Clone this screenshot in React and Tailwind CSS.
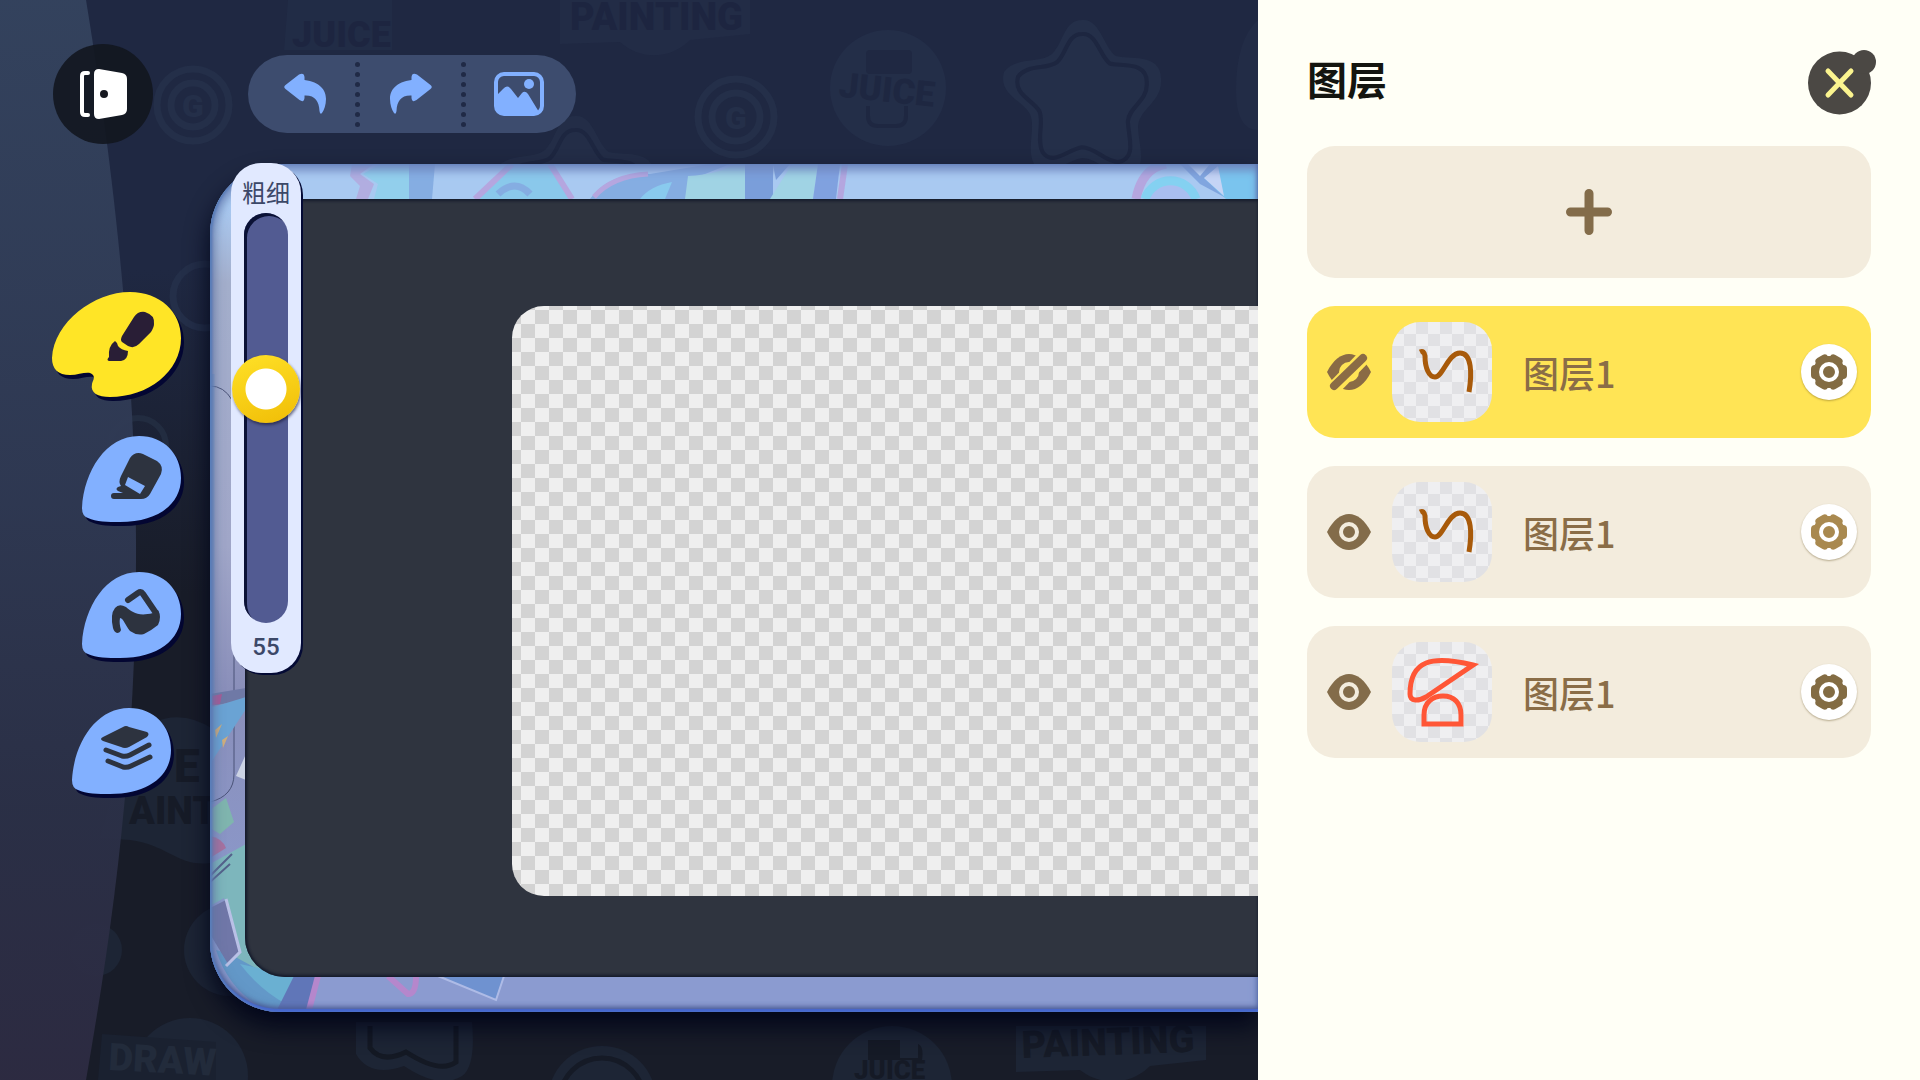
import React, { useState } from 'react';

const DROP_PATH = 'M0 72 C2 35 24 0 57 0 C82 0 99 18 99 42 C99 68 76 86 38 86 C26 86 14 86 6 82 Q0 80 0 72Z';
const PALETTE_PATH =
  'M0 66 C2 30 42 0 78 0 C108 0 129 20 129 46 C129 80 96 105 58 105 C46 105 38 101 40 92 C41 88 43 86 41 83 C37 78 28 83 18 83 C6 83 0 77 0 66Z';

const layers = [
  { id: 1, name: '图层1', visible: false, selected: true, art: 'wave', gear: 'text-[#836c43]' },
  { id: 2, name: '图层1', visible: true, selected: false, art: 'wave', gear: 'text-[#a9894f]' },
  { id: 3, name: '图层1', visible: true, selected: false, art: 'shapes', gear: 'text-[#836c43]' },
];

// Faint stickers printed on the wall behind the board
function Wallpaper() {
  const star =
    'M0 -78 C18 -80 22 -50 34 -42 C46 -38 80 -46 79 -18 C80 4 58 10 56 28 C56 46 68 74 44 78 C28 78 16 60 0 60 C-16 62 -36 84 -48 66 C-56 50 -46 30 -52 16 C-60 2 -84 -4 -78 -26 C-66 -42 -42 -34 -30 -44 C-18 -56 -18 -78 0 -78Z';
  return (
    <svg className="absolute inset-0 w-full h-full" aria-hidden="true">
      <g fill="#242f49" fontFamily="Roboto, sans-serif" fontWeight="900">
        <g fill="none" stroke="#242f49" strokeWidth="7">
          <circle cx="193" cy="105" r="36" />
          <circle cx="193" cy="105" r="22" />
          <circle cx="736" cy="117" r="38" />
          <circle cx="736" cy="117" r="24" />
          <circle cx="205" cy="296" r="32" />
        </g>
        <text x="182" y="117" fontSize="32">G</text>
        <text x="725" y="129" fontSize="32">G</text>
        <path d="M288 0 H392 V50 H284Z" opacity=".5" />
        <text x="292" y="47" fontSize="36" fill="#1d2540">JUICE</text>
        <path d="M560 0 H750 V34 L690 40 C670 60 640 60 620 42 L560 44Z" opacity=".6" />
        <text x="570" y="30" fontSize="38" fill="#1d2540">PAINTING</text>
        <circle cx="888" cy="88" r="58" opacity=".9" />
        <rect x="866" y="50" width="46" height="24" rx="4" fill="#1f2842" />
        <text x="839" y="102" fontSize="35" fill="#1e2741" transform="rotate(6 888 90)">JUICE</text>
        <path d="M868 106 V116 Q868 126 878 126 H896 Q906 126 906 116 V106" fill="none" stroke="#1e2741" strokeWidth="4" />
        <g transform="translate(1082 98)">
          <path d={star} />
          <path d={star} fill="none" stroke="#1d2640" strokeWidth="5" transform="scale(.82)" />
        </g>
        <path d="M1258 20 Q1236 40 1236 90 Q1236 130 1258 130Z" opacity=".6" />
        <circle cx="372" cy="220" r="40" opacity=".8" />
        <g transform="translate(575 194)" opacity=".8">
          <path d={star} />
          <path d={star} fill="none" stroke="#1d2640" strokeWidth="5" transform="scale(.82)" />
        </g>
        <circle cx="138" cy="446" r="28" fill="none" stroke="#222c40" strokeWidth="6" />
      </g>
      <g fill="#1d2535" fontFamily="Roboto, sans-serif" fontWeight="900">
        <path d="M128 740 Q170 700 215 730 V862 C180 870 170 845 130 840 L100 838Z" />
        <text x="174" y="782" fontSize="46" fill="#161b27">E</text>
        <text x="129" y="824" fontSize="38" fill="#161b27">AINT</text>
        <circle cx="230" cy="950" r="46" />
        <circle cx="96" cy="950" r="26" />
        <circle cx="190" cy="1076" r="58" />
        <path d="M102 1034 L216 1042 V1080 H98Z" fill="#1a2130" />
        <text x="108" y="1070" fontSize="38" fill="#222b3b" transform="rotate(3 108 1070)">DRAW</text>
        <path d="M356 1022 V1054 Q370 1078 404 1066 Q440 1090 462 1076 Q476 1066 472 1022Z" />
        <path d="M370 1026 V1048 Q382 1064 406 1052 Q440 1074 456 1062 V1026" fill="none" stroke="#141924" strokeWidth="5" />
        <circle cx="602" cy="1100" r="54" />
        <circle cx="602" cy="1100" r="42" fill="none" stroke="#151a26" strokeWidth="5" />
        <circle cx="892" cy="1086" r="60" />
        <path d="M868 1040 H900 V1058 H918 V1044 Q924 1046 922 1060 H868Z" fill="#151a26" />
        <text x="854" y="1079" fontSize="26" fill="#151a26">JUICE</text>
        <path d="M1016 1026 H1206 V1060 L1150 1066 C1130 1086 1100 1086 1080 1070 L1016 1072Z" />
        <text x="1022" y="1058" fontSize="38" fill="#161b27" transform="rotate(-2 1022 1058)">PAINTING</text>
      </g>
      <defs>
        <linearGradient id="curtain" x1="0" y1="0" x2="0" y2="1">
          <stop offset="0" stopColor="#34435e" />
          <stop offset=".45" stopColor="#2f3953" />
          <stop offset=".75" stopColor="#2b3047" />
          <stop offset="1" stopColor="#2d2b42" />
        </linearGradient>
      </defs>
      <path d="M0 0 H86 C104 110 134 320 136 540 C137 760 112 930 86 1080 H0Z" fill="url(#curtain)" opacity=".96" />
    </svg>
  );
}

// Holographic stickers on the rim of the board
function RimArt() {
  return (
    <svg className="absolute inset-0 w-full h-full" aria-hidden="true">
      <g opacity=".85">
        <path d="M142 0 H164 L150 10 L164 20 L158 35 H146 L150 22 L140 12Z" fill="#b3a9dd" />
        <path d="M170 0 H199 V35 H164 L168 20 L153 10Z" fill="#8fd0ec" />
        <path d="M199 0 H225 L222 35 H199Z" fill="#7fa9e0" />
        <path d="M302 0 H340 L360 35 H265Z" fill="#85c8ea" />
        <path d="M302 0 L265 35 M340 0 L362 35" stroke="#b8a0dc" strokeWidth="6" fill="none" />
        <path d="M288 30 Q305 14 320 30" stroke="#7fa9e0" strokeWidth="7" fill="none" />
        <path d="M380 35 Q400 8 440 10 L500 0 H520 L490 12 L475 35Z" fill="#7fa9e0" />
        <path d="M384 33 Q402 12 438 10" stroke="#b8a0dc" strokeWidth="5" fill="none" />
        <path d="M430 35 Q440 22 462 18 L455 35Z" fill="#84cbee" />
        <path d="M478 12 Q510 10 524 0 H535 V35 H475Z" fill="#9fd5e2" />
        <path d="M535 0 H580 L566 16 L563 0 V35 H535Z" fill="#7297d6" />
        <path d="M582 0 H608 L603 35 H560Z" fill="#9fd5e2" />
        <path d="M608 0 H630 L626 35 H603Z" fill="#7a9bdd" />
        <path d="M635 0 L630 35" stroke="#b7a0dc" strokeWidth="6" />
        <path d="M926 35 Q932 4 956 0" stroke="#b8a0dc" strokeWidth="9" fill="none" />
        <path d="M935 35 A27 27 0 0 1 986 35" fill="#a9bdf0" stroke="#7ed3f2" strokeWidth="9" />
        <path d="M970 0 H1048 V35 H1018 L990 20Z" fill="#7a9fdd" />
        <path d="M978 0 L990 12 L1000 0" fill="#c9defa" />
        <path d="M1012 0 L994 14 L1016 35 H1048 V0Z" fill="#72c4ee" />
        <path d="M1008 2 L994 14 L1014 32Z" fill="#cbd6f6" />
      </g>
      <path d="M0 222 Q14 222 22 236 Q24 244 24 260 V610 Q24 632 0 638" fill="none" stroke="#4a5378" strokeWidth="1" />
      <path d="M3 210 V640" stroke="#6a96cc" strokeWidth="3" opacity=".5" />
      <path d="M0 530 L36 524 V536 L0 542Z" fill="#6f79a6" />
      <path d="M2 532 L12 530 L10 540 L2 541Z" fill="#a85a96" />
      <path d="M0 544 L36 533 V545 L0 600Z" fill="#6aa3d4" />
      <path d="M5 566 L12 560 L6 574Z M12 576 L18 572 L13 584Z" fill="#cfae7c" />
      <path d="M36 590 L26 612 L36 616Z" fill="#ccd3e4" />
      <path d="M0 646 L16 634 L24 658 L10 670 L0 664Z" fill="#7fb5ae" />
      <path d="M0 672 Q12 674 16 684 L0 694Z" fill="#a7719f" />
      <path d="M0 700 L36 680 V775 Q40 806 82 812 L74 842 L16 800 L24 770 L14 734 L0 742Z" fill="#7db6bc" />
      <path d="M0 712 L22 690 M0 718 L20 700" stroke="#53618a" strokeWidth="2" />
      <path d="M20 790 L60 812 L78 836 L70 848 H60 Q20 830 6 786Z" fill="#6398c8" />
      <path d="M30 800 L84 812 L76 840 Q50 826 30 800Z" fill="#6ab0d2" />
      <path d="M0 744 L16 736 L30 786 L18 800 L0 770Z" fill="#7077a8" />
      <path d="M16 735 L30 788 L16 802" fill="none" stroke="#b9c0e6" strokeWidth="3" />
      <path d="M84 812 H106 L98 848 H66Z" fill="#6076b8" />
      <path d="M108 812 L99 846" stroke="#b587cc" strokeWidth="6" />
      <path d="M178 812 L198 830 Q206 830 206 812" fill="none" stroke="#b587cc" strokeWidth="6" />
      <path d="M228 812 L286 836 L294 812Z" fill="#6f92d0" stroke="#aebbe6" strokeWidth="2" />
    </svg>
  );
}

function ExitIcon() {
  return (
    <svg width="100" height="100" viewBox="0 0 100 100" aria-hidden="true">
      <path d="M35 29 H32 Q29 29 29 32 V68 Q29 71 32 71 H35" fill="none" stroke="#fff" strokeWidth="4" strokeLinecap="round" />
      <path d="M46 25 L69 29 Q74 30 74 35 V65 Q74 70 69 71 L46 75 Q41 75 41 70 V30 Q41 25 46 25Z" fill="#fff" />
      <circle cx="51" cy="50" r="4" fill="#16181f" />
    </svg>
  );
}

function ArrowIcon({ flip }) {
  return (
    <svg width="44" height="42" viewBox="0 0 44 42" fill="#82b0ff" aria-hidden="true">
      <path
        transform={flip ? 'translate(43 0) scale(-1 1)' : 'translate(1 0)'}
        d="M1.5 12 L15 1.5 Q20 -1 20.5 4 V7 C36 9 42 17 42 26 C42 32 40 37 38 40 Q36 42 35.500 38 C35 28 31 22 20.500 22.500 V25 Q20 30 15.500 27 L1.500 16 Q-1 14 1.500 12Z"
      />
    </svg>
  );
}

function PictureIcon() {
  return (
    <svg width="50" height="44" viewBox="0 0 50 44" aria-hidden="true">
      <rect x="2" y="2" width="46" height="40" rx="8" fill="none" stroke="#82b0ff" strokeWidth="4" />
      <path d="M2 24 L9 17 Q13 12 17 17 L24 26 L28 21 Q31 18 34 22 L45 40 L40 43 H10 Q2 43 2 34Z" fill="#82b0ff" />
      <circle cx="35" cy="12" r="5" fill="#82b0ff" />
    </svg>
  );
}

function BrushTool() {
  return (
    <svg width="129" height="105" viewBox="0 0 129 105" className="overflow-visible" aria-hidden="true">
      <path d={PALETTE_PATH} transform="translate(3 4)" fill="#030632" />
      <path d={PALETTE_PATH} fill="#ffe526" />
      <path d="M82 25 Q86 19 93 20 Q103 23 102 32 Q102 35 99 40 L87 52 Q82 57 76 54 L70 50 Q68 48 70 44Z" fill="#291e36" />
      <path d="M63 49 Q66 51 66 54 Q69 58 76 59 Q76 68 69 69 H57 Q54 68 57 65 Q56 54 63 49Z" fill="#291e36" />
    </svg>
  );
}

function Drop({ children }) {
  return (
    <svg width="99" height="86" viewBox="0 0 99 86" className="overflow-visible" aria-hidden="true">
      <path d={DROP_PATH} transform="translate(3 4)" fill="#030632" />
      <path d={DROP_PATH} fill="#82b0ff" />
      {children}
    </svg>
  );
}

function EraserTool() {
  return (
    <Drop>
      <path d="M48 22 Q53 15 61 18 L75 25 Q82 30 79 38 L68 58 Q65 63 59 63 H32 Q29 63 29 60 Q29 57 32 57 H41 L36 55 Q33 53 36 51 L39 50 Q36 46 39 40Z" fill="#2d333f" />
      <path d="M46 41 L63 50 L58 58 L43 49Z" fill="#82b0ff" />
    </Drop>
  );
}

function FillTool() {
  return (
    <Drop>
      <path d="M46 28 L56 21 Q59 19 61 22 L74 41" fill="none" stroke="#2d333f" strokeWidth="6" strokeLinecap="round" />
      <path d="M39 58 Q38 61 35 61 Q32 60 31 56 Q28 42 33 36 Q37 31 44 35 C50 40 56 45 71 41 L76 38 Q80 45 76 53 Q70 58 62 62 Q55 64 48 59 C43 53 42 47 38 46 Q37 51 39 58Z" fill="#2d333f" />
    </Drop>
  );
}

function LayersTool() {
  return (
    <Drop>
      <path d="M51 19 Q54 17 57 19 L75 24 Q78 26 75 29 L57 39 Q53 41 49 39 L31 33 Q27 31 31 29Z" fill="#2d333f" />
      <g fill="none" stroke="#2d333f" strokeWidth="5" strokeLinecap="round" strokeLinejoin="round">
        <path d="M34 42 L50 48 Q54 49 58 47 L77 37" />
        <path d="M36 53 L51 59 Q55 60 59 58 L78 49" />
      </g>
    </Drop>
  );
}

function EyeIcon({ off }) {
  const almond = 'M0 18 C6 6 14 0 22 0 C30 0 38 6 44 18 C38 30 30 36 22 36 C14 36 6 30 0 18Z';
  if (off) {
    return (
      <svg width="44" height="36" viewBox="0 0 44 36" className="overflow-visible" aria-hidden="true">
        <path d={almond} fill="#8a6b45" />
        <circle cx="22" cy="18" r="8" fill="none" stroke="#ffe455" strokeWidth="4" />
        <path d="M3 38 L41 -1" stroke="#ffe455" strokeWidth="14" />
        <path d="M7 32 L36 4" stroke="#8a6b45" strokeWidth="8" strokeLinecap="round" />
      </svg>
    );
  }
  return (
    <svg width="44" height="36" viewBox="0 0 44 36" aria-hidden="true">
      <path d={almond} fill="#836c4a" />
      <circle cx="22" cy="18" r="8" fill="none" stroke="#f3ecdd" strokeWidth="4" />
    </svg>
  );
}

function GearIcon() {
  return (
    <svg width="36" height="36" viewBox="-18 -18 36 36" fill="currentColor" aria-hidden="true">
      <circle r="16" />
      {[0, 60, 120, 180, 240, 300].map((angle) => (
        <rect key={angle} x="-7" y="-18" width="14" height="12" rx="4" transform={`rotate(${angle + 90})`} />
      ))}
      <circle r="8" fill="none" stroke="#fff" strokeWidth="4" />
    </svg>
  );
}

function LayerArt({ kind }) {
  return (
    <svg width="100" height="100" viewBox="0 0 100 100" fill="none" aria-hidden="true">
      {kind === 'wave' ? (
        <path d="M28 30 Q32 28 33 34 C33 46 37 55 43 55 C51 55 56 31 68 31 C80 31 80 52 77 70" stroke="#a85a0a" strokeWidth="5" />
      ) : (
        <g stroke="#ff5636" strokeWidth="5">
          <path d="M81 23 C40 13 18 18 18 52 C18 60 27 59 34 55Z" />
          <path d="M32 82 V73 C32 60 41 54 51 54 C62 54 69 61 69 73 V82Z" />
        </g>
      )}
    </svg>
  );
}

function LayerRow({ layer }) {
  return (
    <li
      className={`flex items-center h-[132px] pl-5 pr-[14px] rounded-[28px] ${
        layer.selected ? 'bg-[#ffe455]' : 'bg-[#f3ecdd]'
      }`}
    >
      <button aria-label="显示或隐藏" className="shrink-0">
        <EyeIcon off={!layer.visible} />
      </button>
      <div className="ml-[21px] size-[100px] shrink-0 rounded-[28px] overflow-hidden bg-[conic-gradient(#efeff1_25%,#e1e1e4_0_50%,#efeff1_0_75%,#e1e1e4_0)] bg-[length:24px_24px]">
        <LayerArt kind={layer.art} />
      </div>
      <span className="ml-[31px] flex-1 text-[36px] leading-[48px] font-medium text-[#8a6d47]">{layer.name}</span>
      <button
        aria-label="图层设置"
        className={`size-14 shrink-0 flex items-center justify-center rounded-full bg-white shadow-[0_1px_2px_rgba(90,70,20,0.4)] ${layer.gear}`}
      >
        <GearIcon />
      </button>
    </li>
  );
}

function Dots() {
  return (
    <div className="flex flex-col gap-[5px]">
      {[0, 1, 2, 3, 4, 5, 6].map((dot) => (
        <span key={dot} className="size-[5px] rounded-full bg-[#202a46]" />
      ))}
    </div>
  );
}

export default function App() {
  const [size, setSize] = useState(55);

  return (
    <div className="flex h-screen overflow-hidden font-['Noto_Sans_CJK_SC',sans-serif]">
      <main className="relative flex-1 min-w-0 flex flex-col overflow-hidden bg-[linear-gradient(#1f2842_0%,#1f2842_25%,#181c28_55%,#181c28_100%)]">
        <Wallpaper />

        <header className="relative flex items-center gap-[95px] pl-[53px] pt-11 pb-5">
          <button aria-label="退出" className="size-[100px] rounded-full bg-[#12161f]/90">
            <ExitIcon />
          </button>
          <div className="flex items-center justify-between h-[78px] w-[328px] pl-[35px] pr-8 rounded-full bg-[#3d4c6e]">
            <button aria-label="撤销"><ArrowIcon /></button>
            <Dots />
            <button aria-label="重做"><ArrowIcon flip /></button>
            <Dots />
            <button aria-label="图片"><PictureIcon /></button>
          </div>
        </header>

        <div className="relative flex-1 flex pb-[68px]">
          <nav className="w-[210px] shrink-0 flex flex-col items-end gap-[50px] pt-32 pr-[29px]">
            <button aria-label="画笔" className="-mb-[11px]"><BrushTool /></button>
            <button aria-label="橡皮"><EraserTool /></button>
            <button aria-label="填充"><FillTool /></button>
            <button aria-label="图层" className="mr-[10px]"><LayersTool /></button>
          </nav>

          <section className="relative flex-1 flex flex-col rounded-l-[70px] pl-[35px] py-[35px] bg-[linear-gradient(#a9c9f1_0%,#a9c9f1_5%,#a3aecb_14%,#a0a6c8_45%,#8a8fba_62%,#8b9bd0_95%)] shadow-[0_14px_24px_#02061a]">
            <div className="absolute inset-0 rounded-l-[70px] overflow-hidden">
              <RimArt />
            </div>
            <div className="absolute inset-0 rounded-l-[70px] shadow-[inset_2px_0_2px_#5a7fba,inset_0_-3px_1px_#4668d0,inset_0_-5px_5px_#4a5a94,inset_0_6px_10px_#6f88c0,inset_6px_0_10px_rgba(90,110,150,0.5)]" />

            {/* drawing area */}
            <div className="relative flex-1 flex rounded-bl-[40px] pl-[267px] pt-[107px] pb-[81px] bg-[#2f343f] shadow-[inset_2px_2px_3px_#151b2c,inset_0_-2px_3px_#151b2c]">
              <div className="flex-1 rounded-l-[32px] bg-[conic-gradient(#d3d3d3_25%,#efefef_0_50%,#d3d3d3_0_75%,#efefef_0)] bg-[length:28px_28px] bg-[position:9px_4px]" />
            </div>

            {/* brush size slider floating over the rim */}
            <div className="absolute left-[21px] -top-px w-[70px] h-[510px] flex flex-col items-center rounded-[30px] bg-[#e1e9ff] pt-[11px] shadow-[2px_2px_0_#040a35]">
              <label htmlFor="brush-size" className="text-[24px] leading-[36px] text-[#3c4868]">粗细</label>
              <div className="relative mt-[3px] w-11 flex-1 rounded-full bg-[#525b92] shadow-[inset_3px_3px_0_#0b1236]">
                <input
                  id="brush-size"
                  type="range"
                  min="0"
                  max="94"
                  value={size}
                  onChange={(e) => setSize(Number(e.target.value))}
                  className="absolute -left-3 top-0 w-[68px] h-full appearance-none bg-transparent [writing-mode:vertical-lr] [direction:rtl] [&::-webkit-slider-thumb]:appearance-none [&::-webkit-slider-thumb]:size-[68px] [&::-webkit-slider-thumb]:rounded-full [&::-webkit-slider-thumb]:bg-[radial-gradient(circle,#fff_20px,transparent_21px),linear-gradient(160deg,#ffe128,#f0bd06)] [&::-webkit-slider-thumb]:shadow-[1px_2px_3px_rgba(20,20,50,0.6)]"
                />
              </div>
              <output htmlFor="brush-size" className="mt-2 mb-[10px] text-[24px] leading-[32px] font-medium text-[#3c4868] font-[Roboto,sans-serif]">
                {size}
              </output>
            </div>
          </section>
        </div>
      </main>

      <aside className="relative w-[662px] shrink-0 px-[49px] pt-12 bg-[#fffff6]">
        <div className="flex items-start justify-between h-[98px]">
          <h1 className="text-[40px] leading-[60px] font-bold text-[#14150f]">图层</h1>
          <button aria-label="关闭" className="mt-[2px] w-[63px] h-[64px]">
            <svg width="69" height="64" viewBox="0 0 69 64" className="overflow-visible max-w-none" aria-hidden="true">
              <circle cx="31.500" cy="33" r="31.500" fill="#4b4844" />
              <circle cx="56" cy="12" r="12" fill="#4b4844" />
              <path d="M20 21 L43 45 M43 21 L20 45" stroke="#fbf48f" strokeWidth="5" strokeLinecap="round" />
            </svg>
          </button>
        </div>

        <button aria-label="新建图层" className="w-full h-[132px] flex items-center justify-center rounded-[28px] bg-[#f3ecdd]">
          <svg width="46" height="46" viewBox="0 0 46 46" aria-hidden="true">
            <path d="M23 4.500 V41.500 M4.500 23 H41.500" stroke="#836c4a" strokeWidth="9" strokeLinecap="round" />
          </svg>
        </button>

        <ul className="mt-7 flex flex-col gap-7">
          {layers.map((layer) => (
            <LayerRow key={layer.id} layer={layer} />
          ))}
        </ul>
      </aside>
    </div>
  );
}
